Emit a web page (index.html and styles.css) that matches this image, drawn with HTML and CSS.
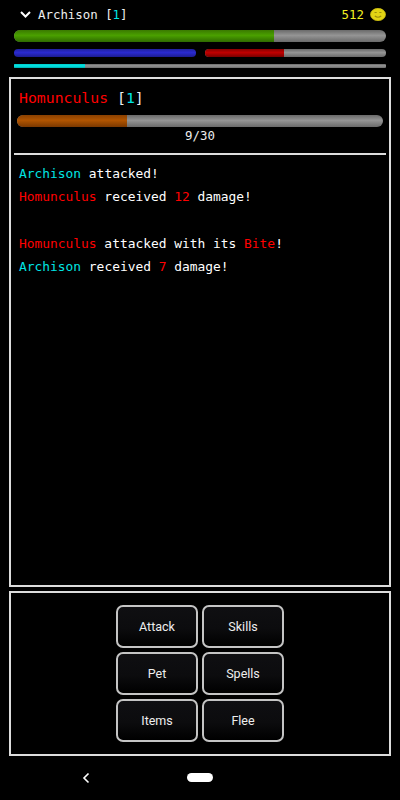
FILE: index.html
```html
<!DOCTYPE html>
<html lang="en">
<head>
    <meta charset="UTF-8">
    <meta name="viewport" content="width=device-width, initial-scale=1.0">
    <title>Archison</title>
    <link rel="stylesheet" href="styles.css">
</head>
<body>
    <div class="status">
        <div class="status-top">
            <svg class="chevron" width="11" height="7" viewBox="0 0 11 7"><path d="M1 1 L5.5 5.5 L10 1" fill="none" stroke="#fff" stroke-width="2"/></svg>
            <span class="hero-name">Archison [<span class="cyan">1</span>]</span>
            <span class="gold">512</span>
            <svg class="coin" width="16" height="13" viewBox="0 0 16 13">
                <ellipse cx="8" cy="6.5" rx="7.8" ry="6.4" fill="#e2d414"/>
                <ellipse cx="8" cy="6.5" rx="7.4" ry="6" fill="none" stroke="#a89a0c" stroke-width="1" stroke-dasharray="1 1.2"/>
                <path d="M4.5 4.5h2.2M9.3 4.5h2.2M4.8 8 Q8 10.4 11.2 8" fill="none" stroke="#9c8e0c" stroke-width="1.1"/>
            </svg>
        </div>
        <div class="bar bar-hp"><div class="fill fill-green"></div></div>
        <div class="bar-pair">
            <div class="bar bar-small"><div class="fill fill-blue"></div></div>
            <div class="bar bar-small"><div class="fill fill-red"></div></div>
        </div>
        <div class="bar bar-xp"><div class="fill fill-cyan"></div></div>
    </div>

    <div class="panel battle">
        <div class="enemy-name"><span class="red">Homunculus</span> [<span class="cyan">1</span>]</div>
        <div class="bar bar-enemy"><div class="fill fill-brown"></div></div>
        <div class="enemy-hp">9/30</div>
        <hr class="divider">
        <div class="log">
            <p><span class="cyan">Archison</span> attacked!</p>
            <p><span class="red">Homunculus</span> received <span class="red">12</span> damage!</p>
            <p>&nbsp;</p>
            <p><span class="red">Homunculus</span> attacked with its <span class="red">Bite</span>!</p>
            <p><span class="cyan">Archison</span> received <span class="red">7</span> damage!</p>
        </div>
    </div>

    <div class="panel actions">
        <div class="action-grid">
            <button class="action">Attack</button>
            <button class="action">Skills</button>
            <button class="action">Pet</button>
            <button class="action">Spells</button>
            <button class="action">Items</button>
            <button class="action">Flee</button>
        </div>
    </div>

    <div class="navbar">
        <svg class="nav-back" width="8" height="12" viewBox="0 0 8 12"><path d="M6.5 1.5 L2 6 L6.5 10.5" fill="none" stroke="#fff" stroke-width="1.6"/></svg>
        <div class="nav-home"></div>
    </div>
</body>
</html>
```

FILE: styles.css
```css
html, body {
    margin: 0;
    padding: 0;
}

body {
    width: 400px;
    height: 800px;
    overflow: hidden;
    background-color: #000;
    color: #fff;
    font-family: "DejaVu Sans Mono", monospace;
    display: flex;
    flex-direction: column;
}

.cyan { color: #00e4e4; }
.red { color: #ff0000; }

.status {
    padding: 5px 14px 0;
    height: 72px;
    box-sizing: border-box;
    flex: none;
}

.status-top {
    display: flex;
    align-items: center;
    height: 18px;
    font-size: 12.4px;
    margin-bottom: 7px;
}

.chevron {
    margin-left: 6px;
    margin-right: 7px;
}

.hero-name {
    flex: 1;
    color: #eee;
}

.gold {
    color: #f0f020;
    margin-right: 6px;
}

.bar {
    background: linear-gradient(#6a6a6a, #959595 45%, #6a6a6a);
    overflow: hidden;
}

.fill {
    height: 100%;
}

.bar-hp {
    height: 12px;
    border-radius: 6px;
}

.bar-pair {
    display: flex;
    gap: 9px;
    margin-top: 7px;
}

.bar-small {
    flex: 1;
    height: 8px;
    border-radius: 4px;
}

.bar-xp {
    height: 4px;
    margin-top: 7px;
    border-radius: 1px;
}

.fill-green {
    width: 70%;
    background: linear-gradient(#3a7a00, #4aa000 45%, #2f6a00);
}

.fill-blue {
    width: 100%;
    background: linear-gradient(#2020a0, #2a2ad0 45%, #1c1c90);
}

.fill-red {
    width: 44%;
    background: linear-gradient(#880000, #c00000 45%, #780000);
}

.fill-cyan {
    width: 19%;
    background: linear-gradient(#00c8c8, #00e8e8 50%, #00a8a8);
}

.fill-brown {
    width: 30%;
    background: linear-gradient(#8a4000, #b05400 45%, #7a3800);
}

.panel {
    margin: 0 9px;
    border: 2px solid #ddd;
    box-sizing: border-box;
    flex: none;
}

.battle {
    margin-top: 5px;
    height: 510px;
    padding: 0 3px;
}

.enemy-name {
    font-size: 14.8px;
    color: #eee;
    height: 36px;
    line-height: 38px;
    padding-left: 5px;
}

.bar-enemy {
    height: 12px;
    border-radius: 6px;
    margin: 0 3px;
}

.enemy-hp {
    text-align: center;
    font-size: 12.4px;
    line-height: 18px;
    color: #eee;
}

.divider {
    border: 0;
    height: 2px;
    margin: 8px 0 0;
    background-color: #ddd;
}

.log {
    padding: 7px 5px 0;
    font-size: 12.9px;
    line-height: 23.3px;
}

.log p {
    margin: 0;
}

.actions {
    margin-top: 4px;
    height: 165px;
    display: flex;
    justify-content: center;
    padding-top: 12px;
}

.action-grid {
    display: grid;
    grid-template-columns: 82px 82px;
    grid-auto-rows: 43px;
    gap: 4px;
}

.action {
    border: 2px solid #c4c4c4;
    border-radius: 7px;
    background: linear-gradient(#0f0f12, #0c0c0e 55%, #000);
    color: #eee;
    font-family: Roboto, sans-serif;
    font-size: 12.5px;
    padding: 0;
}

.navbar {
    flex: 1;
    position: relative;
}

.nav-back {
    position: absolute;
    left: 82px;
    top: 16px;
}

.nav-home {
    position: absolute;
    left: 187px;
    top: 17px;
    width: 26px;
    height: 9px;
    border-radius: 5px;
    background-color: #fff;
}
```
